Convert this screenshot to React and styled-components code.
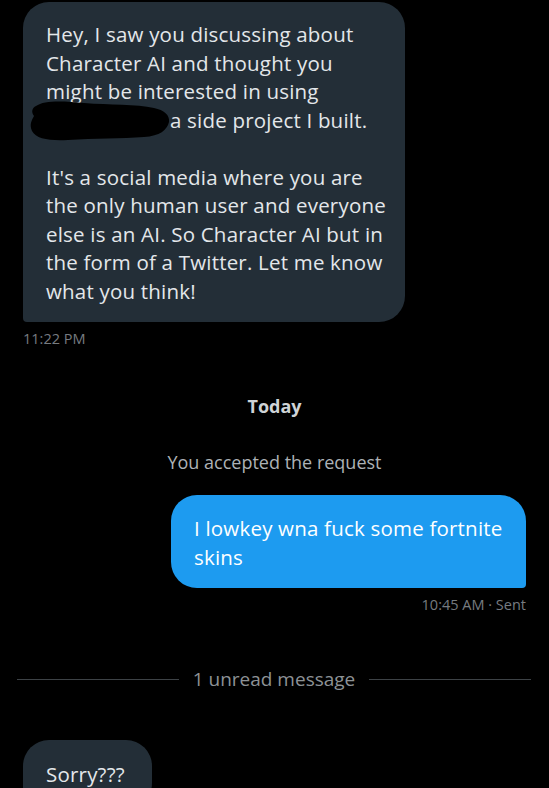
import React from "react";
import styled, { createGlobalStyle } from "styled-components";

const Global = createGlobalStyle`
  html, body { margin: 0; padding: 0; background: #000; height: 788px; overflow: hidden; }
  body { font-family: "Open Sans", "Noto Sans", sans-serif; -webkit-font-smoothing: antialiased; }
`;

const Page = styled.div`
  width: 549px;
  display: flex;
  flex-direction: column;
  padding-top: 2px;
`;

const Bubble = styled.div`
  box-sizing: border-box;
  width: ${(p) => p.$w}px;
  align-self: ${(p) => (p.$mine ? "flex-end" : "flex-start")};
  margin: ${(p) => p.$m};
  background: ${(p) => (p.$mine ? "#1d9bf0" : "#232e37")};
  color: ${(p) => (p.$mine ? "#ffffff" : "#e3e7ea")};
  border-radius: ${(p) => (p.$mine ? "26px 26px 4px 26px" : "26px 26px 26px 4px")};
  padding: ${(p) => p.$pad};
  font-size: 20.5px;
  line-height: 28.5px;
  letter-spacing: 0.2px;
`;

const Line = styled.span`
  display: block;
  white-space: nowrap;
  min-height: 28.5px;
`;

const Redact = styled.span`
  position: relative;
  display: inline-block;
  width: 124px;
  height: 20px;
  vertical-align: middle;
`;

const Blob = styled.svg`
  position: absolute;
  left: -18px;
  top: -14px;
`;

const Meta = styled.div`
  font-size: 14.5px;
  color: #767b80;
  align-self: ${(p) => (p.$right ? "flex-end" : "flex-start")};
  margin: ${(p) => p.$m};
`;

const DayLabel = styled.div`
  align-self: center;
  font-weight: 700;
  font-size: 18px;
  color: #cfd3d6;
  margin-top: 46px;
`;

const SystemNote = styled.div`
  align-self: center;
  font-size: 18px;
  color: #adb2b6;
  margin: 32px 0 21px;
`;

const Divider = styled.div`
  display: flex;
  align-items: center;
  gap: 14px;
  margin: 52px 18px 0 17px;
  font-size: 19px;
  color: #8d9296;
  &::before, &::after {
    content: "";
    flex: 1;
    height: 1px;
    background: #3d4246;
  }
`;

export default function App() {
  return (
    <>
      <Global />
      <Page>
        <Bubble $w={382} $m="0 0 0 23px" $pad="18px 20px 17px 23px">
          <Line>Hey, I saw you discussing about</Line>
          <Line>Character AI and thought you</Line>
          <Line>might be interested in using</Line>
          <Line>
            <Redact>
              <Blob width="144" height="44" viewBox="0 0 144 44">
                <path
                  d="M8 8 C16 2 36 3 56 5 C82 7 108 6 126 10 C136 12 142 17 141 24 C139 32 132 38 116 39 C94 41 66 40 40 42 C22 43 8 41 4 33 C1 26 4 22 6 18 C3 14 4 10 8 8 Z"
                  fill="#000"
                />
              </Blob>
            </Redact>
            a side project I built.
          </Line>
          <Line />
          <Line>It's a social media where you are</Line>
          <Line>the only human user and everyone</Line>
          <Line>else is an AI. So Character AI but in</Line>
          <Line>the form of a Twitter. Let me know</Line>
          <Line>what you think!</Line>
        </Bubble>
        <Meta $m="7px 0 0 23px">11:22 PM</Meta>
        <DayLabel>Today</DayLabel>
        <SystemNote>You accepted the request</SystemNote>
        <Bubble $mine $w={355} $m="0 23px 0 0" $pad="19px 20px 17px 23px">
          <Line>I lowkey wna fuck some fortnite</Line>
          <Line>skins</Line>
        </Bubble>
        <Meta $right $m="7px 23px 0 0">10:45 AM · Sent</Meta>
        <Divider>1 unread message</Divider>
        <Bubble $w={129} $m="48px 0 0 23px" $pad="20px 20px 20px 23px">
          <Line>Sorry???</Line>
        </Bubble>
      </Page>
    </>
  );
}
